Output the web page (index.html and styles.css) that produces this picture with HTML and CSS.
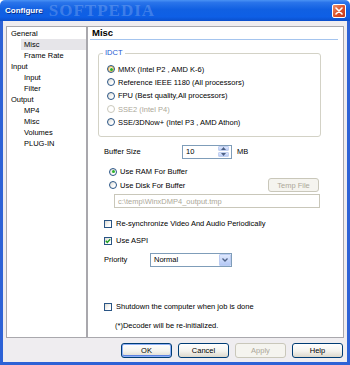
FILE: index.html
```html
<!DOCTYPE html>
<html lang="en">
<head>
  <meta charset="UTF-8" />
  <title>Configure</title>
  <link rel="stylesheet" href="styles.css">
</head>
<body>
  <div class="window">
    <div class="titlebar">
      <span class="title">Configure</span>
      <span class="watermark">SOFTPEDIA</span>
      <span class="close">
        <svg width="8" height="8" viewBox="0 0 8 8"><path d="M1 1 L7 7 M7 1 L1 7" stroke="#fff" stroke-width="1.6" stroke-linecap="round"/></svg>
      </span>
    </div>

    <div class="client">
      <div class="main">
        <ul class="tree">
          <li>General</li>
          <li class="child selected">Misc</li>
          <li class="child">Frame Rate</li>
          <li>Input</li>
          <li class="child">Input</li>
          <li class="child">Filter</li>
          <li>Output</li>
          <li class="child">MP4</li>
          <li class="child">Misc</li>
          <li class="child">Volumes</li>
          <li class="child">PLUG-IN</li>
        </ul>

        <div class="panel">
          <div class="panel-head">Misc</div>
          <div class="panel-body">
            <fieldset class="group">
              <legend>IDCT</legend>
              <div class="opt"><span class="radio on hot"></span>MMX (Intel P2 , AMD K-6)</div>
              <div class="opt"><span class="radio"></span>Reference IEEE 1180 (All processors)</div>
              <div class="opt"><span class="radio"></span>FPU (Best quality,All processors)</div>
              <div class="opt disabled"><span class="radio"></span>SSE2 (Intel P4)</div>
              <div class="opt"><span class="radio"></span>SSE/3DNow+ (Intel P3 , AMD Athon)</div>
            </fieldset>

            <div class="buffer-row">
              <span class="label buffer-label">Buffer Size</span>
              <span class="field num">
                <span class="value">10</span>
                <span class="spin">
                  <span class="spin-btn"><svg width="5" height="3" viewBox="0 0 5 3"><path d="M0 3 L2.5 0 L5 3 Z" fill="#4d6185"/></svg></span>
                  <span class="spin-btn"><svg width="5" height="3" viewBox="0 0 5 3"><path d="M0 0 L2.5 3 L5 0 Z" fill="#4d6185"/></svg></span>
                </span>
              </span>
              <span class="unit">MB</span>
            </div>

            <div class="opt sub ram"><span class="radio on"></span>Use RAM For Buffer</div>
            <div class="opt sub disk">
              <span class="opt-inner"><span class="radio"></span>Use Disk For Buffer</span>
              <span class="btn off temp">Temp File</span>
            </div>
            <div class="field path">c:\temp\WinxDMP4_output.tmp</div>

            <div class="opt chk resync"><span class="check"></span>Re-synchronize Video And Audio Periodically</div>
            <div class="opt chk aspi">
              <span class="check"><svg width="6" height="6" viewBox="0 0 6 6"><path d="M0.8 2.8 L2.3 4.4 L5.2 1.2" fill="none" stroke="#21a121" stroke-width="1.4"/></svg></span>Use ASPI
            </div>

            <div class="priority-row">
              <span class="label priority-label">Priority</span>
              <span class="field select">
                <span class="value">Normal</span>
                <span class="drop"><svg width="6" height="4" viewBox="0 0 6 4"><path d="M0.5 0.5 L3 3 L5.5 0.5" fill="none" stroke="#4d6185" stroke-width="1.3"/></svg></span>
              </span>
            </div>

            <div class="opt chk shutdown"><span class="check"></span>Shutdown the computer when job is done</div>
            <div class="note">(*)Decoder will be re-initialized.</div>
          </div>
        </div>
      </div>

      <div class="buttons">
        <span class="btn default">OK</span>
        <span class="btn">Cancel</span>
        <span class="btn off">Apply</span>
        <span class="btn">Help</span>
      </div>
    </div>
  </div>
</body>
</html>
```

FILE: styles.css
```css
* { box-sizing: border-box; }
body {
  margin: 0;
  background: #fff;
  font-family: "Liberation Sans", Arial, sans-serif;
  font-size: 7.5px;
  color: #000;
}
.window {
  width: 350px;
  height: 365px;
  display: flex;
  flex-direction: column;
  overflow: hidden;
}

/* Title bar */
.titlebar {
  height: 21px;
  display: flex;
  align-items: center;
  padding: 0 4px 0 5px;
  border-radius: 5px 5px 0 0;
  background: linear-gradient(#4a92f4 0%, #2a74ea 12%, #1160e2 45%, #0e5fe6 80%, #0b4fcc 100%);
}
.title {
  color: #fff;
  font-weight: bold;
  font-size: 8px;
  text-shadow: 1px 1px 0 #0a2f8a;
}
.watermark {
  flex: 1;
  margin-left: 6px;
  font-family: "Liberation Serif", serif;
  font-size: 17px;
  font-weight: bold;
  letter-spacing: 1px;
  color: rgba(255,255,255,0.2);
}
.close {
  width: 14px;
  height: 14px;
  margin-top: 1px;
  display: flex;
  align-items: center;
  justify-content: center;
  border: 1px solid #fff;
  border-radius: 2px;
  background: linear-gradient(135deg, #f0906a, #d9502a 55%, #c2381a);
}

/* Client area */
.client {
  flex: 1;
  display: flex;
  flex-direction: column;
  padding: 5px 3px 0;
  background: #efedf0;
  border: solid #2d62d6;
  border-width: 0 3px 3px;
}
.main {
  display: flex;
  height: 312px;
}
.tree {
  width: 81px;
  margin: 0;
  padding: 0.5px 0 0;
  list-style: none;
  background: #fff;
  border: 1px solid #a9a8ad;
}
.tree li {
  height: 11.1px;
  line-height: 11.1px;
  padding-left: 4px;
  white-space: nowrap;
}
.tree li.child {
  margin-left: 14px;
  padding-left: 3px;
}
.tree li.selected { background: #e6e5e9; }

.panel {
  flex: 1;
  background: #fff;
  border: 1px solid #a9a8ad;
}
.panel-head {
  height: 13px;
  line-height: 12px;
  margin: 0 5px 0 2px;
  padding-left: 2px;
  font-size: 9.5px;
  font-weight: bold;
  border-bottom: 1px solid #a4c4ee;
}
.panel-body {
  padding: 0 22px 0 10px;
}

/* IDCT group */
.group {
  margin: 8px 0 0;
  padding: 4.5px 8px 7px;
  border: 1px solid #d3d2c6;
  border-radius: 3px;
}
.group legend {
  margin-left: -4px;
  padding: 0 2px;
  line-height: 10px;
  color: #1d5ad4;
}

.opt {
  display: flex;
  align-items: center;
  gap: 3px;
  height: 13.3px;
  white-space: nowrap;
}
.opt.disabled { color: #aca899; }
.radio {
  position: relative;
  flex: none;
  width: 8px;
  height: 8px;
  border-radius: 50%;
  border: 1px solid #2a5585;
  background: linear-gradient(135deg, #dcdad2, #fff 70%);
}
.radio.on::after {
  content: '';
  position: absolute;
  top: 1.5px; left: 1.5px;
  width: 3px; height: 3px;
  border-radius: 50%;
  background: #2ab22a;
}
.radio.hot { box-shadow: inset 0 0 0 1px #f6be4f; }
.opt.disabled .radio {
  border-color: #cac8bb;
  background: #fff;
}

/* Buffer size row */
.buffer-row {
  display: flex;
  align-items: center;
  height: 14px;
  margin: 8px 0 0 6px;
}
.label { flex: none; }
.buffer-label { width: 78px; }
.field {
  display: flex;
  align-items: center;
  height: 14px;
  border: 1px solid #7f9db9;
  background: #fff;
}
.field .value {
  flex: 1;
  padding-left: 3px;
}
.num { width: 50px; }
.spin {
  display: flex;
  flex-direction: column;
  gap: 1px;
  margin-right: 2px;
}
.spin-btn {
  width: 11px;
  height: 5px;
  display: flex;
  align-items: center;
  justify-content: center;
  border-radius: 1px;
  background: linear-gradient(#dfe8fd, #b8cbf6);
  border: 1px solid #c3d1f0;
}
.unit { margin-left: 5px; }

.opt.sub { margin-left: 11px; }
.opt.ram { height: 13px; margin-top: 6.5px; }
.opt.disk {
  height: 14px;
  justify-content: space-between;
  margin-right: 2px;
}
.opt-inner {
  display: flex;
  align-items: center;
  gap: 3px;
}
.path {
  margin: 2px 1px 0 16px;
  padding-left: 3px;
  color: #aca899;
  border-color: #c9c7ba;
}

.opt.chk {
  height: 13px;
  gap: 4px;
  margin-left: 6px;
}
.check {
  flex: none;
  width: 8px;
  height: 8px;
  display: flex;
  align-items: center;
  justify-content: center;
  border: 1px solid #2a5585;
  background: linear-gradient(135deg, #dcdad2, #fff 70%);
}
.resync { margin-top: 9px; }
.aspi { margin-top: 4px; }

.priority-row {
  display: flex;
  align-items: center;
  height: 14px;
  margin: 5.5px 0 0 6px;
}
.priority-label { width: 46px; }
.select { width: 82px; }
.drop {
  width: 12px;
  height: 12px;
  display: flex;
  align-items: center;
  justify-content: center;
  border-radius: 1px;
  background: linear-gradient(#dfe8fd, #b4c8f5);
  border: 1px solid #bccdf2;
}

.shutdown { margin-top: 33.5px; }
.note {
  height: 13px;
  line-height: 13px;
  margin: 6px 0 0 17px;
}

/* Buttons */
.btn {
  width: 51px;
  height: 15px;
  display: flex;
  align-items: center;
  justify-content: center;
  border: 1px solid #003c74;
  border-radius: 3px;
  background: linear-gradient(#fff, #f4f3ee 55%, #dcd8cc);
}
.btn.default { box-shadow: inset 0 0 0 1px #8fb1f6, inset 0 -1px 0 1px #5d83e0; }
.btn.off {
  color: #aca899;
  border-color: #c9c7ba;
  background: #f5f4ef;
}
.temp { height: 14px; }
.buttons {
  display: flex;
  justify-content: flex-end;
  gap: 6px;
  padding: 5px 1px 0 0;
}
```
